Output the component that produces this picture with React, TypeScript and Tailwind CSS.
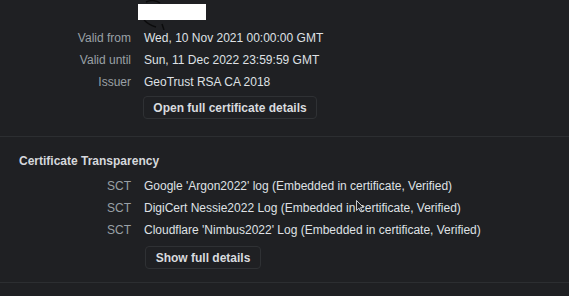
import React from "react";

const issued = [
  ["Valid from", "Wed, 10 Nov 2021 00:00:00 GMT"],
  ["Valid until", "Sun, 11 Dec 2022 23:59:59 GMT"],
  ["Issuer", "GeoTrust RSA CA 2018"],
];

const scts = [
  "Google 'Argon2022' log (Embedded in certificate, Verified)",
  "DigiCert Nessie2022 Log (Embedded in certificate, Verified)",
  "Cloudflare 'Nimbus2022' Log (Embedded in certificate, Verified)",
];

function Row({ label, value }: { label: string; value: string }) {
  return (
    <div className="flex h-[22px] items-center">
      <div className="w-[131px] shrink-0 text-right text-[#9aa0a6]">{label}</div>
      <div className="ml-[13px] text-[#dfe1e5]">{value}</div>
    </div>
  );
}

export default function App() {
  return (
    <div className="w-[569px] h-[301px] overflow-hidden bg-white font-['Liberation_Sans',Arial,sans-serif] text-[12px] leading-4">
      <div className="h-[296px] bg-[#1f2023] relative">
        {/* redacted logo */}
        <div className="relative h-[27px]">
          <svg className="absolute left-[140px] top-0" width="50" height="30" viewBox="0 0 50 30" fill="none">
            <path d="M6 2 C10 0 16 0 20 3 M4 20 C8 24 12 26 16 27 M22 24 L24 30" stroke="#0b0b0c" strokeWidth="1.4" />
          </svg>
          <div className="absolute left-[138px] top-[4px] w-[68px] h-[16px] bg-white" />
        </div>

        {issued.map(([l, v]) => (
          <Row key={l} label={l} value={v} />
        ))}

        <div className="pl-[143px] mt-[3px]">
          <button className="h-[23px] w-[174px] rounded-[4px] border border-[#2f3134] bg-[#1f2023] text-[#d9dbdf] font-bold">
            Open full certificate details
          </button>
        </div>

        <div className="mt-[17px] border-t border-[#2c2e31]" />

        <div className="pl-[19px] pt-[16px] h-[38px] font-bold text-[#d6d8dc]">Certificate Transparency</div>

        {scts.map((s) => (
          <Row key={s} label="SCT" value={s} />
        ))}

        <div className="pl-[145px] mt-[5px]">
          <button className="h-[23px] w-[116px] rounded-[4px] border border-[#2f3134] bg-[#1f2023] text-[#d9dbdf] font-bold">
            Show full details
          </button>
        </div>

        <div className="mt-[13px] border-t border-[#2c2e31]" />

        {/* mouse cursor */}
        <svg className="absolute left-[356px] top-[200px]" width="8" height="13" viewBox="0 0 8 13">
          <path d="M0.5 0.5 L0.5 10.5 L3 8.2 L5 12 L6.3 11.3 L4.5 7.7 L7.5 7.5 Z" fill="#1f2023" stroke="#d8dadd" strokeWidth="0.9" />
        </svg>
      </div>
    </div>
  );
}
